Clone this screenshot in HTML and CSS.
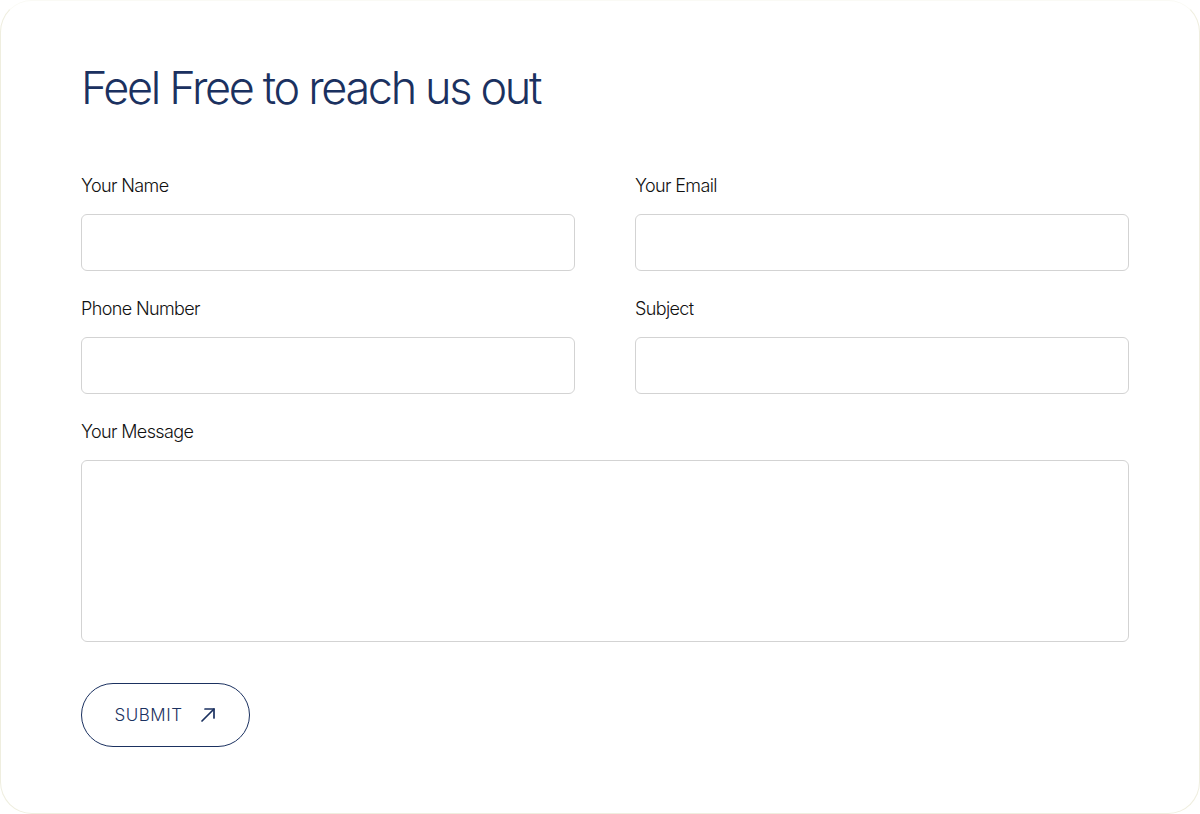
FILE: index.html
```html
<!DOCTYPE html>
<html>
<head>
<meta charset="utf-8">
<link rel="stylesheet" href="styles.css">
</head>
<body>
<div class="card">
  <h1 class="title">Feel Free to reach us out</h1>
  <form class="form">
    <div class="grid">
      <div class="field">
        <label class="label">Your Name</label>
        <input class="input" type="text">
      </div>
      <div class="field">
        <label class="label">Your Email</label>
        <input class="input" type="email">
      </div>
      <div class="field">
        <label class="label">Phone Number</label>
        <input class="input" type="text">
      </div>
      <div class="field">
        <label class="label">Subject</label>
        <input class="input" type="text">
      </div>
      <div class="field full">
        <label class="label">Your Message</label>
        <textarea class="input textarea"></textarea>
      </div>
    </div>
    <button class="submit" type="button">
      <span>SUBMIT</span>
      <svg class="arrow" width="16" height="16" viewBox="0 0 16 16" fill="none" stroke="currentColor" stroke-width="1.7" stroke-linecap="round" stroke-linejoin="round">
        <path d="M2 14 L14 2"/>
        <path d="M5 2 H14 V11"/>
      </svg>
    </button>
  </form>
</div>
</body>
</html>
```
FILE: styles.css
```css
* { box-sizing: border-box; }
html, body { margin: 0; padding: 0; background: #ffffff; }
body {
  font-family: Inter, "Helvetica Neue", Arial, sans-serif;
  height: 814px;
  overflow: hidden;
}
.card {
  width: 1200px;
  height: 814px;
  border: 1px solid #efeedf;
  border-top-color: #fafaf5;
  border-radius: 32px;
  background: #ffffff;
  padding: 57px 70px 0 80px;
}
.title {
  margin: 0;
  font-weight: 300;
  font-size: 45px;
  line-height: 60px;
  letter-spacing: -0.052em;
  color: #1b3160;
}
.form { margin-top: 56px; }
.grid {
  display: grid;
  grid-template-columns: 1fr 1fr;
  column-gap: 60px;
  row-gap: 26px;
}
.field { display: flex; flex-direction: column; gap: 18px; }
.full { grid-column: 1 / -1; }
.label {
  font-size: 18px;
  line-height: 22px;
  font-weight: 300;
  letter-spacing: -0.035em;
  color: #111111;
  transform: translateY(1px);
}
.input {
  display: block;
  width: 100%;
  height: 57px;
  border: 1px solid #d3d3d3;
  border-radius: 6px;
  background: #fff;
  font: inherit;
  outline: none;
}
.textarea { height: 182px; resize: none; }
.submit {
  margin-top: 41px;
  width: 169px;
  height: 64px;
  border: 1px solid #1b3160;
  border-radius: 32px;
  background: #fff;
  color: #1b3160;
  display: flex;
  align-items: center;
  justify-content: center;
  gap: 18px;
  font-family: Inter, Arial, sans-serif;
  font-size: 17px;
  font-weight: 300;
  letter-spacing: 0.03em;
  padding: 0 0 0 0;
}
.arrow { display: block; }
```
